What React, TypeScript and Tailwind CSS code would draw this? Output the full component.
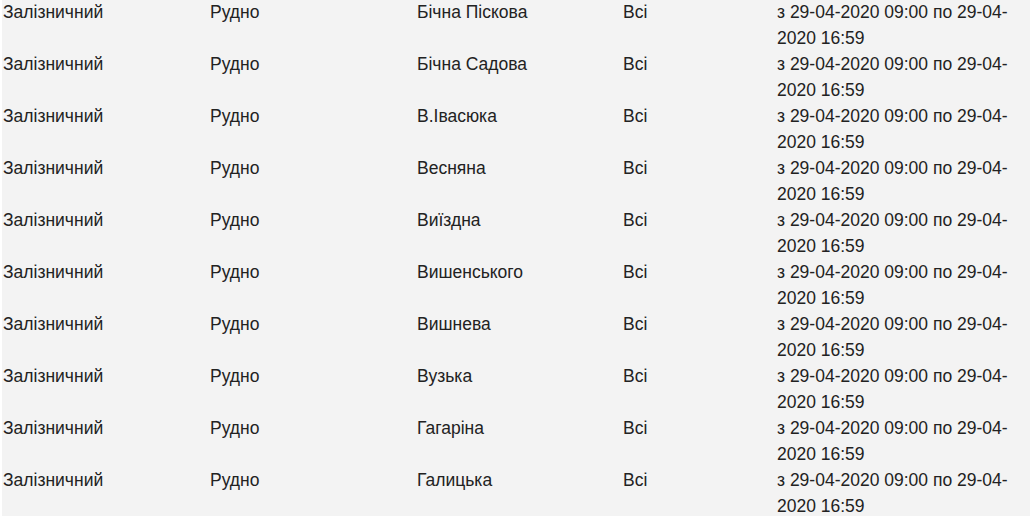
import React from 'react';

const streets = [
  'Бічна Піскова',
  'Бічна Садова',
  'В.Івасюка',
  'Весняна',
  'Виїздна',
  'Вишенського',
  'Вишнева',
  'Вузька',
  'Гагаріна',
  'Галицька',
];

const App: React.FC = () => {
  return (
    <div className="w-[1032px] h-[517px] overflow-hidden bg-white pl-[2px] pr-[2px]">
      <div
        className="bg-[#f3f3f3] h-[516px] overflow-hidden text-[17.5px] leading-[26px] text-[#222]"
        style={{ fontFamily: '"Liberation Sans", Arial, sans-serif' }}
      >
        <div className="-mt-[1px]">
          {streets.map(street => (
            <div key={street} className="grid grid-cols-[207px_207px_206px_154px_251px] h-[52px] pl-[1px]">
              <div>Залізничний</div>
              <div>Рудно</div>
              <div>{street}</div>
              <div>Всі</div>
              <div>з 29-04-2020 09:00 по 29-04-2020 16:59</div>
            </div>
          ))}
        </div>
      </div>
    </div>
  );
};

export default App;
